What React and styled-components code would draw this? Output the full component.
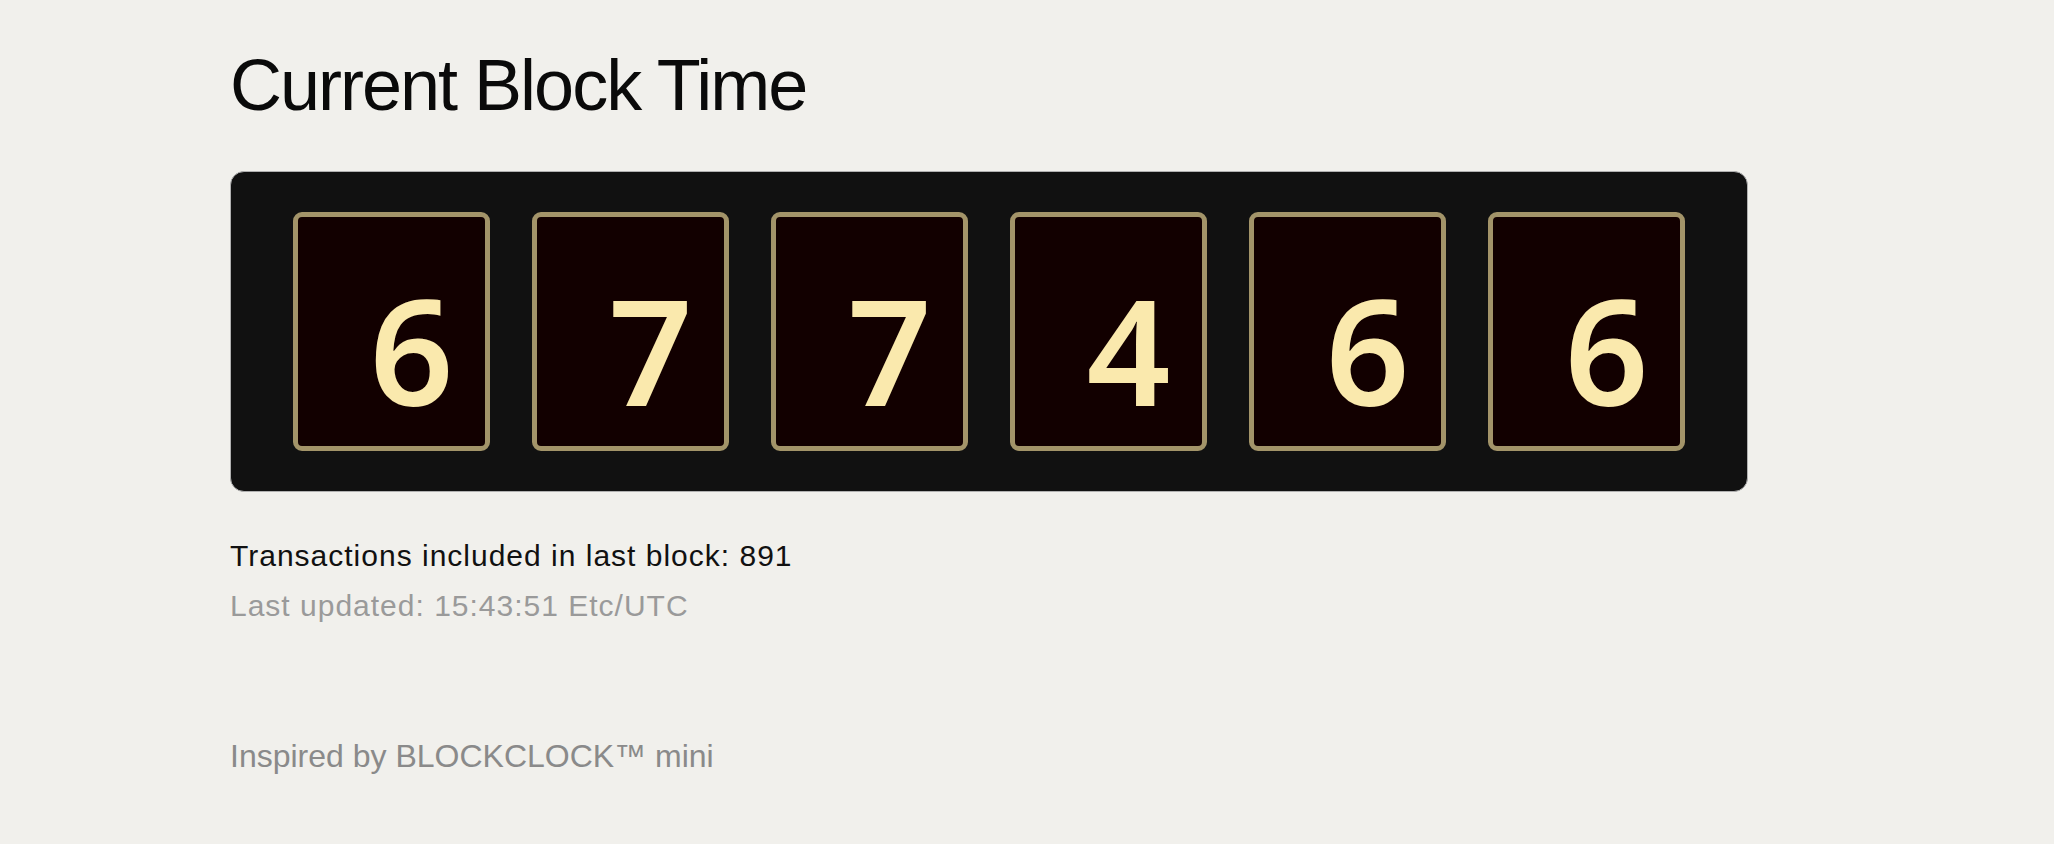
import React from "react";
import styled, { createGlobalStyle } from "styled-components";

const GlobalStyle = createGlobalStyle`
  html, body {
    margin: 0;
    padding: 0;
    background: #f1f0ec;
  }
  body {
    font-family: "Liberation Sans", Arial, Helvetica, sans-serif;
    color: #111;
  }
`;

const Page = styled.main`
  padding: 49px 0 40px 230px;
  display: flex;
  flex-direction: column;
  align-items: flex-start;
`;

const Title = styled.h1`
  margin: 0;
  font-size: 72px;
  line-height: 1;
  font-weight: 400;
  letter-spacing: -2px;
  color: #0a0a0a;
`;

const Clock = styled.section`
  margin-top: 50px;
  box-sizing: border-box;
  width: 1518px;
  height: 321px;
  padding: 40px 62px;
  display: flex;
  gap: 42px;
  background: #111111;
  border: 1px solid #b0b0b0;
  border-radius: 14px;
`;

const Digit = styled.div`
  box-sizing: border-box;
  width: 197px;
  height: 239px;
  border: 5px solid #a39469;
  border-radius: 9px;
  background: #120000;
  display: flex;
  align-items: center;
  justify-content: center;
  padding: 36px 0 0 40px;
  color: #fae9ad;
  font-family: "Noto Sans", "Open Sans", sans-serif;
  font-weight: 600;
  font-size: 147px;
  line-height: 1;
`;

const Info = styled.p`
  margin: 0;
  font-size: 30px;
  line-height: 50px;
  letter-spacing: 1px;
  color: ${(p) => (p.$muted ? "#9a9a9a" : "#111")};
`;

const InfoBlock = styled.div`
  margin-top: 39px;
`;

const Footer = styled.footer`
  margin-top: 100px;
  font-size: 32px;
  line-height: 50px;
  color: #8a8a8a;
`;

const digits = ["6", "7", "7", "4", "6", "6"];

export default function App() {
  return (
    <>
      <GlobalStyle />
      <Page>
        <Title>Current Block Time</Title>
        <Clock>
          {digits.map((d, i) => (
            <Digit key={i}>{d}</Digit>
          ))}
        </Clock>
        <InfoBlock>
          <Info>Transactions included in last block: 891</Info>
          <Info $muted>Last updated: 15:43:51 Etc/UTC</Info>
        </InfoBlock>
        <Footer>Inspired by BLOCKCLOCK™ mini</Footer>
      </Page>
    </>
  );
}
